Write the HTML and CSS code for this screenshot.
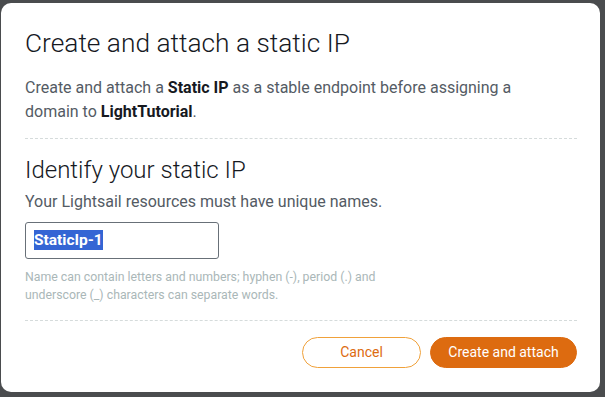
FILE: index.html
```html
<!DOCTYPE html>
<html lang="en">
<head>
  <meta charset="UTF-8">
  <meta name="viewport" content="width=device-width, initial-scale=1.0">
  <title>Create and attach a static IP</title>
  <link rel="stylesheet" href="styles.css">
</head>
<body>
  <div class="modal">
    <h1>Create and attach a static IP</h1>
    <p class="intro">Create and attach a <b>Static IP</b> as a stable endpoint before assigning a domain to <b>LightTutorial</b>.</p>

    <div class="section">
      <h2>Identify your static IP</h2>
      <p class="hint">Your Lightsail resources must have unique names.</p>
      <div class="name-input"><span class="selected">StaticIp-1</span></div>
      <p class="help">Name can contain letters and numbers; hyphen (-), period (.) and<br>underscore (_) characters can separate words.</p>
    </div>

    <div class="actions">
      <button class="btn btn-cancel">Cancel</button>
      <button class="btn btn-primary">Create and attach</button>
    </div>
  </div>
</body>
</html>
```

FILE: styles.css
```css
html, body {
  height: 100%;
}
body {
  margin: 0;
  background: #4a4c4e;
  font-family: Roboto, "Liberation Sans", sans-serif;
  color: #545b64;
  padding: 3px 5px 5px 1px;
  box-sizing: border-box;
}
.modal {
  background: #fff;
  border-radius: 10px;
  height: 100%;
  box-sizing: border-box;
  padding: 24px 23px 0 24px;
}
h1 {
  margin: 0;
  font-size: 26.3px;
  font-weight: 300;
  color: #16191f;
  line-height: 32px;
}
.intro {
  margin: 16.5px 0 0;
  font-size: 16px;
  line-height: 24px;
  max-width: 530px;
}
b {
  color: #16191f;
  font-weight: 700;
}
.section {
  margin-top: 14px;
  border-top: 1px dashed #d5dbdb;
  border-bottom: 1px dashed #d5dbdb;
  padding: 16px 0 16px;
}
h2 {
  margin: 0;
  font-size: 24px;
  font-weight: 300;
  color: #16191f;
  line-height: 30px;
}
.hint {
  margin: 6px 0 0;
  font-size: 16px;
  line-height: 22px;
}
.name-input {
  margin-top: 9px;
  width: 194px;
  height: 37px;
  box-sizing: border-box;
  border: 1px solid #687078;
  border-radius: 3px;
  padding: 0 8px;
  display: flex;
  align-items: center;
}
.selected {
  background: #3465d4;
  color: #fff;
  font-size: 15.5px;
  font-weight: 700;
  line-height: 20px;
}
.help {
  margin: 9px 0 0;
  font-size: 12.3px;
  line-height: 18px;
  color: #aab7b8;
}
.actions {
  display: flex;
  justify-content: flex-end;
  gap: 9px;
  padding-top: 16px;
}
.btn {
  height: 31px;
  border-radius: 16px;
  font-family: inherit;
  font-size: 14px;
  padding: 0;
  cursor: pointer;
}
.btn-cancel {
  width: 119px;
  background: #fff;
  color: #dd6b10;
  border: 1px solid #f0a13a;
}
.btn-primary {
  width: 147px;
  background: #dd6b10;
  color: #fff;
  border: 1px solid #dd6b10;
}
```
